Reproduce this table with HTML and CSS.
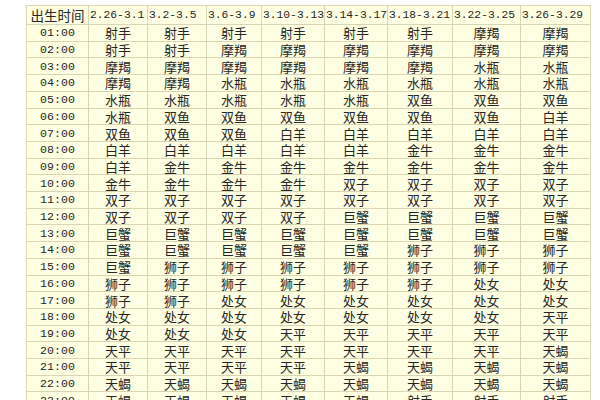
FILE: index.html
```html
<!DOCTYPE html>
<html lang="zh-CN">
<head>
<meta charset="utf-8">
<title>星座表</title>
<link rel="stylesheet" href="styles.css">
</head>
<body>
<div class="sheet">
  <div class="row head"><span class="c first">出生时间</span><span class="c h">2.26-3.1</span><span class="c h">3.2-3.5</span><span class="c h">3.6-3.9</span><span class="c h">3.10-3.13</span><span class="c h">3.14-3.17</span><span class="c h">3.18-3.21</span><span class="c h">3.22-3.25</span><span class="c h">3.26-3.29</span></div>
  <div class="row"><span class="c t">01:00</span><span class="c">射手</span><span class="c">射手</span><span class="c">射手</span><span class="c">射手</span><span class="c">射手</span><span class="c">射手</span><span class="c">摩羯</span><span class="c">摩羯</span></div>
  <div class="row"><span class="c t">02:00</span><span class="c">射手</span><span class="c">射手</span><span class="c">摩羯</span><span class="c">摩羯</span><span class="c">摩羯</span><span class="c">摩羯</span><span class="c">摩羯</span><span class="c">摩羯</span></div>
  <div class="row"><span class="c t">03:00</span><span class="c">摩羯</span><span class="c">摩羯</span><span class="c">摩羯</span><span class="c">摩羯</span><span class="c">摩羯</span><span class="c">摩羯</span><span class="c">水瓶</span><span class="c">水瓶</span></div>
  <div class="row"><span class="c t">04:00</span><span class="c">摩羯</span><span class="c">摩羯</span><span class="c">水瓶</span><span class="c">水瓶</span><span class="c">水瓶</span><span class="c">水瓶</span><span class="c">水瓶</span><span class="c">水瓶</span></div>
  <div class="row"><span class="c t">05:00</span><span class="c">水瓶</span><span class="c">水瓶</span><span class="c">水瓶</span><span class="c">水瓶</span><span class="c">水瓶</span><span class="c">双鱼</span><span class="c">双鱼</span><span class="c">双鱼</span></div>
  <div class="row"><span class="c t">06:00</span><span class="c">水瓶</span><span class="c">双鱼</span><span class="c">双鱼</span><span class="c">双鱼</span><span class="c">双鱼</span><span class="c">双鱼</span><span class="c">双鱼</span><span class="c">白羊</span></div>
  <div class="row"><span class="c t">07:00</span><span class="c">双鱼</span><span class="c">双鱼</span><span class="c">双鱼</span><span class="c">白羊</span><span class="c">白羊</span><span class="c">白羊</span><span class="c">白羊</span><span class="c">白羊</span></div>
  <div class="row"><span class="c t">08:00</span><span class="c">白羊</span><span class="c">白羊</span><span class="c">白羊</span><span class="c">白羊</span><span class="c">白羊</span><span class="c">金牛</span><span class="c">金牛</span><span class="c">金牛</span></div>
  <div class="row"><span class="c t">09:00</span><span class="c">白羊</span><span class="c">金牛</span><span class="c">金牛</span><span class="c">金牛</span><span class="c">金牛</span><span class="c">金牛</span><span class="c">金牛</span><span class="c">金牛</span></div>
  <div class="row"><span class="c t">10:00</span><span class="c">金牛</span><span class="c">金牛</span><span class="c">金牛</span><span class="c">金牛</span><span class="c">双子</span><span class="c">双子</span><span class="c">双子</span><span class="c">双子</span></div>
  <div class="row"><span class="c t">11:00</span><span class="c">双子</span><span class="c">双子</span><span class="c">双子</span><span class="c">双子</span><span class="c">双子</span><span class="c">双子</span><span class="c">双子</span><span class="c">双子</span></div>
  <div class="row"><span class="c t">12:00</span><span class="c">双子</span><span class="c">双子</span><span class="c">双子</span><span class="c">双子</span><span class="c">巨蟹</span><span class="c">巨蟹</span><span class="c">巨蟹</span><span class="c">巨蟹</span></div>
  <div class="row"><span class="c t">13:00</span><span class="c">巨蟹</span><span class="c">巨蟹</span><span class="c">巨蟹</span><span class="c">巨蟹</span><span class="c">巨蟹</span><span class="c">巨蟹</span><span class="c">巨蟹</span><span class="c">巨蟹</span></div>
  <div class="row"><span class="c t">14:00</span><span class="c">巨蟹</span><span class="c">巨蟹</span><span class="c">巨蟹</span><span class="c">巨蟹</span><span class="c">巨蟹</span><span class="c">狮子</span><span class="c">狮子</span><span class="c">狮子</span></div>
  <div class="row"><span class="c t">15:00</span><span class="c">巨蟹</span><span class="c">狮子</span><span class="c">狮子</span><span class="c">狮子</span><span class="c">狮子</span><span class="c">狮子</span><span class="c">狮子</span><span class="c">狮子</span></div>
  <div class="row"><span class="c t">16:00</span><span class="c">狮子</span><span class="c">狮子</span><span class="c">狮子</span><span class="c">狮子</span><span class="c">狮子</span><span class="c">狮子</span><span class="c">处女</span><span class="c">处女</span></div>
  <div class="row"><span class="c t">17:00</span><span class="c">狮子</span><span class="c">狮子</span><span class="c">处女</span><span class="c">处女</span><span class="c">处女</span><span class="c">处女</span><span class="c">处女</span><span class="c">处女</span></div>
  <div class="row"><span class="c t">18:00</span><span class="c">处女</span><span class="c">处女</span><span class="c">处女</span><span class="c">处女</span><span class="c">处女</span><span class="c">处女</span><span class="c">处女</span><span class="c">天平</span></div>
  <div class="row"><span class="c t">19:00</span><span class="c">处女</span><span class="c">处女</span><span class="c">处女</span><span class="c">天平</span><span class="c">天平</span><span class="c">天平</span><span class="c">天平</span><span class="c">天平</span></div>
  <div class="row"><span class="c t">20:00</span><span class="c">天平</span><span class="c">天平</span><span class="c">天平</span><span class="c">天平</span><span class="c">天平</span><span class="c">天平</span><span class="c">天平</span><span class="c">天蝎</span></div>
  <div class="row"><span class="c t">21:00</span><span class="c">天平</span><span class="c">天平</span><span class="c">天平</span><span class="c">天平</span><span class="c">天蝎</span><span class="c">天蝎</span><span class="c">天蝎</span><span class="c">天蝎</span></div>
  <div class="row"><span class="c t">22:00</span><span class="c">天蝎</span><span class="c">天蝎</span><span class="c">天蝎</span><span class="c">天蝎</span><span class="c">天蝎</span><span class="c">天蝎</span><span class="c">天蝎</span><span class="c">天蝎</span></div>
  <div class="row"><span class="c t">23:00</span><span class="c">天蝎</span><span class="c">天蝎</span><span class="c">天蝎</span><span class="c">天蝎</span><span class="c">天蝎</span><span class="c">射手</span><span class="c">射手</span><span class="c">射手</span></div>
  <div class="row"><span class="c t">24:00</span><span class="c">射手</span><span class="c">射手</span><span class="c">射手</span><span class="c">射手</span><span class="c">射手</span><span class="c">射手</span><span class="c">射手</span><span class="c">射手</span></div>
</div>
</body>
</html>
```

FILE: styles.css
```css
html, body {
  margin: 0;
  background: #ffffff;
  overflow: hidden;
}
body {
  padding: 5px 0 0 26px;
  width: 600px;
  height: 400px;
  box-sizing: border-box;
}
.sheet {
  display: grid;
  grid-template-columns: 61px 58px 58px 54px 62px 62px 64px 67px 69px;
  grid-template-rows: 18px;
  grid-auto-rows: 15.71px;
  gap: 1px;
  padding: 1px;
  width: max-content;
  background: #d9d6b4;
  font-family: "Noto Sans CJK SC", "Noto Sans", sans-serif;
  color: #262626;
}
.row {
  display: contents;
}
.c {
  display: flex;
  align-items: center;
  justify-content: center;
  white-space: nowrap;
  background: #ffffe3;
  font-size: 13px;
  line-height: 15px;
  height: 100%;
  min-width: 0;
}
.head .c {
  line-height: 17px;
}
.h {
  justify-content: flex-start;
  padding-left: 1px;
  font-family: "Liberation Mono", "DejaVu Sans Mono", monospace;
  font-size: 11.3px;
}
.first {
  font-size: 13.5px;
}
.t {
  font-family: "Liberation Mono", "DejaVu Sans Mono", monospace;
  font-size: 11.6px;
}
```
